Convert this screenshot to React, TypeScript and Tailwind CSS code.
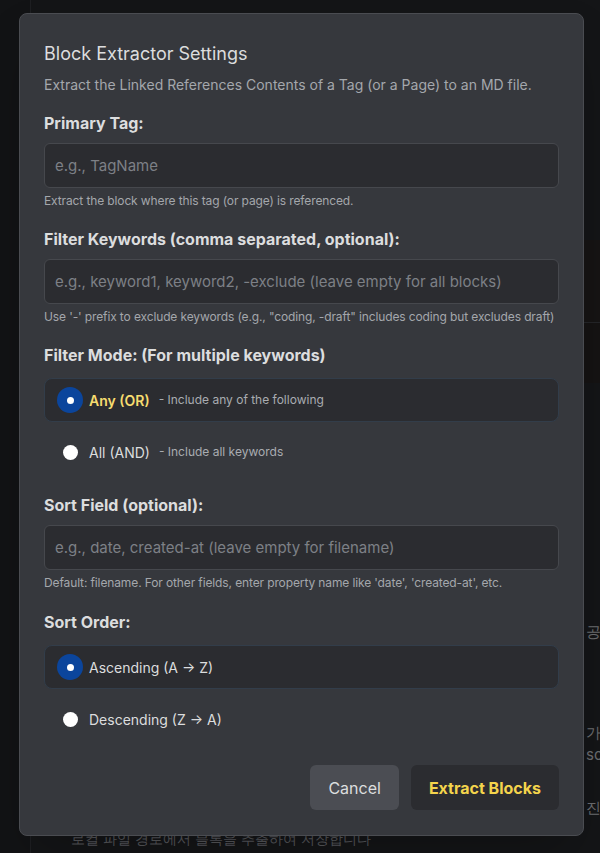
import { useState } from 'react';

type Option = { value: string; label: string; hint?: string };

const FILTER_MODES: Option[] = [
  { value: 'any', label: 'Any (OR)', hint: '- Include any of the following' },
  { value: 'all', label: 'All (AND)', hint: '- Include all keywords' },
];

const SORT_ORDERS: Option[] = [
  { value: 'asc', label: 'Ascending (A → Z)' },
  { value: 'desc', label: 'Descending (Z → A)' },
];

function RadioGroup({
  options,
  value,
  onChange,
  boldSelected,
}: {
  options: Option[];
  value: string;
  onChange: (v: string) => void;
  boldSelected?: boolean;
}) {
  return (
    <div className="mt-[11px] flex flex-col gap-2">
      {options.map((opt) => {
        const selected = opt.value === value;
        return (
          <button
            key={opt.value}
            type="button"
            onClick={() => onChange(opt.value)}
            className={
              selected
                ? 'flex h-11 items-center rounded-lg border border-[#323d4a] bg-[#2b2c30] pl-3 text-left'
                : 'flex h-11 items-center rounded-lg border border-transparent pl-3 text-left'
            }
          >
            {selected ? (
              <span className="flex h-[26px] w-[26px] items-center justify-center rounded-full bg-[#0b459c]">
                <span className="h-[7px] w-[7px] rounded-full bg-white" />
              </span>
            ) : (
              <span className="flex h-[26px] w-[26px] items-center justify-center">
                <span className="h-[15px] w-[15px] rounded-full bg-white" />
              </span>
            )}
            <span
              className={
                selected && boldSelected
                  ? 'ml-[6px] text-[14px] font-semibold text-[#f7dc6f]'
                  : 'ml-[6px] text-[14px] text-[#dcddde]'
              }
            >
              {opt.label}
            </span>
            {opt.hint && <span className="ml-[9px] text-[12px] text-[#a9acb1]">{opt.hint}</span>}
          </button>
        );
      })}
    </div>
  );
}

function Field({
  label,
  placeholder,
  help,
  className,
}: {
  label: string;
  placeholder: string;
  help: string;
  className?: string;
}) {
  return (
    <div className={className}>
      <label className="block text-[16px] leading-6 font-bold text-[#dcddde]">{label}</label>
      <input
        type="text"
        placeholder={placeholder}
        className="mt-2 block h-[45px] w-full rounded-md border border-[#46484d] bg-[#2b2c30] px-[10px] text-[15px] text-[#dcddde] outline-none placeholder:text-[#7d8086]"
      />
      <p className="mt-[5px] whitespace-nowrap text-[12px] leading-4 tracking-[-0.12px] text-[#a4a7ac]">{help}</p>
    </div>
  );
}

export default function App() {
  const [mode, setMode] = useState('any');
  const [order, setOrder] = useState('asc');

  return (
    <div className="relative h-[853px] w-[600px] overflow-hidden bg-[#1e1f22] font-['Inter',sans-serif]">
      {/* page behind the dialog */}
      <div className="flex h-full">
        <div className="w-[30px] bg-[#1b1c1f]" />
        <div className="flex flex-1 flex-col border-l border-[#2c2d31]">
          <div className="h-[240px]" />
          <div className="h-[82px] bg-[#201d1d]" />
          <div className="h-px bg-[#34353a]" />
          <div className="h-[60px] bg-[#1f1c1c]" />
          <div className="flex flex-1 flex-col items-end text-[15px] text-[#9a9ca0]">
            <p className="mt-[238px] w-[14px] overflow-hidden">공</p>
            <p className="mt-[78px] w-[14px] overflow-hidden">가</p>
            <p className="w-[14px] overflow-hidden">so</p>
            <p className="mt-[30px] w-[14px] overflow-hidden">진</p>
            <p className="mt-[9px] w-full pl-[40px] whitespace-nowrap text-[14px] text-[#7b7d82]">
              로컬 파일 경로에서 블록을 추출하여 저장합니다
            </p>
          </div>
        </div>
      </div>
      <div className="absolute inset-0 bg-black/30" />

      {/* dialog */}
      <div className="absolute left-[19px] top-[13px] w-[565px] rounded-lg border border-[#4a4c51] bg-[#36383d] px-6 pt-[26px] pb-[25px] shadow-2xl">
        <h2 className="text-[18px] leading-7 text-[#dcddde]">Block Extractor Settings</h2>
        <p className="mt-[7px] text-[14px] leading-5 text-[#a4a7ac]">
          Extract the Linked References Contents of a Tag (or a Page) to an MD file.
        </p>

        <Field
          className="mt-4"
          label="Primary Tag:"
          placeholder="e.g., TagName"
          help="Extract the block where this tag (or page) is referenced."
        />
        <Field
          className="mt-[18px]"
          label="Filter Keywords (comma separated, optional):"
          placeholder="e.g., keyword1, keyword2, -exclude (leave empty for all blocks)"
          help={`Use '-' prefix to exclude keywords (e.g., "coding, -draft" includes coding but excludes draft)`}
        />

        <div className="mt-[18px]">
          <label className="block text-[16px] leading-6 font-bold text-[#dcddde]">
            Filter Mode: (For multiple keywords)
          </label>
          <RadioGroup options={FILTER_MODES} value={mode} onChange={setMode} boldSelected />
        </div>

        <Field
          className="mt-[19px]"
          label="Sort Field (optional):"
          placeholder="e.g., date, created-at (leave empty for filename)"
          help="Default: filename. For other fields, enter property name like 'date', 'created-at', etc."
        />

        <div className="mt-[19px]">
          <label className="block text-[16px] leading-6 font-bold text-[#dcddde]">Sort Order:</label>
          <RadioGroup options={SORT_ORDERS} value={order} onChange={setOrder} />
        </div>

        <div className="mt-[24px] flex justify-end gap-3">
          <button
            type="button"
            className="h-[45px] rounded-md bg-[#4b4d53] px-[18px] text-[16px] text-[#dcddde]"
          >
            Cancel
          </button>
          <button
            type="button"
            className="h-[45px] rounded-md bg-[#2b2c30] px-[18px] text-[16px] font-bold text-[#f4d44c]"
          >
            Extract Blocks
          </button>
        </div>
      </div>
    </div>
  );
}
